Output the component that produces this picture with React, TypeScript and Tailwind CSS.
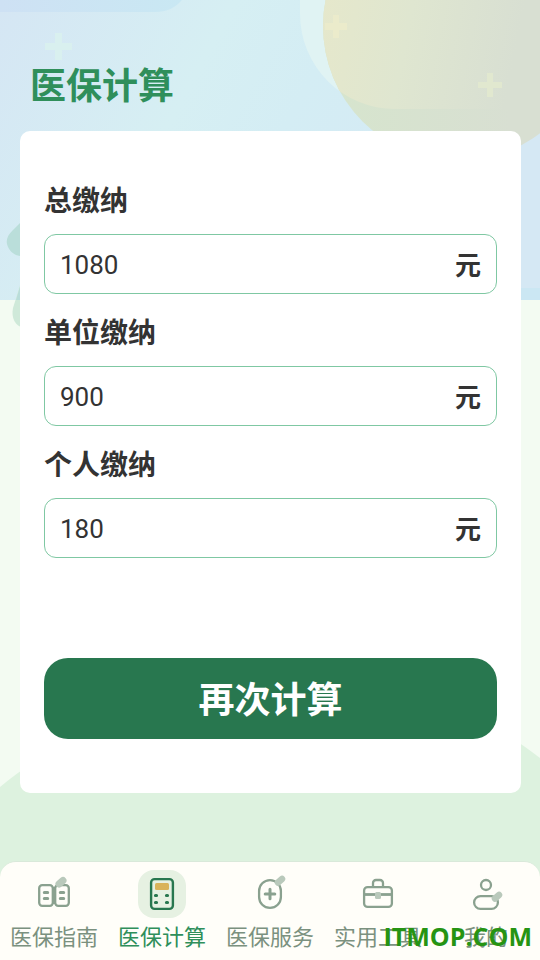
import React, { useState } from 'react';

interface FieldProps {
  id: string;
  label: string;
  value: string;
  onChange: (value: string) => void;
}

const AmountField: React.FC<FieldProps> = ({ id, label, value, onChange }) => (
  <div>
    <label htmlFor={id} className="mb-[15px] block text-[28px] leading-10 font-bold text-[#333333]">
      {label}
    </label>
    <div className="flex h-[60px] items-center rounded-xl border border-[#7fc8a3] px-[15px]">
      <input
        id={id}
        type="text"
        inputMode="decimal"
        value={value}
        onChange={(e) => onChange(e.target.value)}
        className="min-w-0 flex-1 bg-transparent pt-0.5 font-[Roboto,sans-serif] text-[26px] leading-10 text-[#333333] outline-none"
      />
      <span className="text-[26px] leading-10 font-bold text-[#333333]">元</span>
    </div>
  </div>
);

const GuideIcon = () => (
  <svg viewBox="0 0 48 48" className="h-12 w-12" fill="none" stroke="#8aa18f" strokeWidth="2.3">
    <rect x="9.2" y="15.2" width="13.6" height="20.6" rx="3" />
    <rect x="25.2" y="15.2" width="13.6" height="20.6" rx="3" />
    <path d="M24 17v17" strokeWidth="3" />
    <path d="M14.3 22.5h3.4M14.3 28.5h3.4M30.3 22.5h3.4M30.3 28.5h3.4" strokeWidth="3" strokeLinecap="round" />
    <path d="M29 14l4-3.5" stroke="#b9c9bb" strokeWidth="7" strokeLinecap="round" />
  </svg>
);

const CalculatorIcon = () => (
  <svg viewBox="0 0 48 48" className="h-12 w-12" fill="none" stroke="#28774f" strokeWidth="2.4">
    <rect x="13.1" y="9.1" width="21.8" height="29.8" rx="3.5" />
    <rect x="17" y="13" width="14" height="7" rx="1.5" fill="#d9b35a" stroke="none" />
    <path d="M17.5 25.5h1M28.5 25.5h1M17.5 32.5h1M28.5 32.5h1" strokeWidth="3.2" strokeLinecap="round" />
  </svg>
);

const ServiceIcon = () => (
  <svg viewBox="0 0 48 48" className="h-12 w-12" fill="none" stroke="#8aa18f" strokeWidth="2.3">
    <rect x="13.1" y="10.1" width="21.8" height="27.8" rx="10.9" />
    <path d="M24 19.2v9.6M19.2 24h9.6" strokeWidth="3" strokeLinecap="round" />
    <path d="M32 12.5l4-3.5" stroke="#b9c9bb" strokeWidth="6.5" strokeLinecap="round" />
  </svg>
);

const ToolsIcon = () => (
  <svg viewBox="0 0 48 48" className="h-12 w-12" fill="none" stroke="#8aa18f" strokeWidth="2.3">
    <rect x="10.1" y="17.1" width="27.8" height="19.8" rx="3.5" />
    <path d="M19 17v-4a3 3 0 0 1 3-3h4a3 3 0 0 1 3 3v4" />
    <path d="M10 24.5h28" strokeWidth="2.8" />
    <rect x="21" y="22" width="6" height="7" rx="1.5" fill="#b9c9bb" stroke="none" />
  </svg>
);

const MineIcon = () => (
  <svg viewBox="0 0 48 48" className="h-12 w-12" fill="none" stroke="#8aa18f" strokeWidth="2.3">
    <circle cx="24" cy="15" r="5" />
    <rect x="12.1" y="26.1" width="23.8" height="12.8" rx="6.4" />
    <path d="M33 28.5l4-3.5" stroke="#b9c9bb" strokeWidth="6.5" strokeLinecap="round" />
  </svg>
);

const tabs = [
  { label: '医保指南', icon: <GuideIcon /> },
  { label: '医保计算', icon: <CalculatorIcon />, active: true },
  { label: '医保服务', icon: <ServiceIcon /> },
  { label: '实用工具', icon: <ToolsIcon /> },
  { label: '我的', icon: <MineIcon /> },
];

const Backdrop = () => (
  <svg
    viewBox="0 0 540 960"
    preserveAspectRatio="xMidYMin slice"
    className="absolute inset-0 -z-10 h-full w-full"
    aria-hidden="true"
  >
    <defs>
      <linearGradient id="sky" x1="0" y1="0" x2="1" y2="0.3">
        <stop offset="0" stopColor="#d5e6f4" />
        <stop offset="0.4" stopColor="#d6eff3" />
        <stop offset="0.6" stopColor="#d4edf4" />
        <stop offset="1" stopColor="#d5e8f4" />
      </linearGradient>
      <linearGradient id="band" x1="0" y1="0" x2="1" y2="0">
        <stop offset="0" stopColor="#cee1f4" />
        <stop offset="1" stopColor="#c9e8f3" />
      </linearGradient>
      <linearGradient id="sun" x1="0" y1="0" x2="1" y2="0.2">
        <stop offset="0" stopColor="#e7e8ca" />
        <stop offset="0.4" stopColor="#dfe6d0" />
        <stop offset="0.8" stopColor="#d8dfd2" />
      </linearGradient>
      <linearGradient id="sunEdge" x1="0" y1="0" x2="1" y2="0">
        <stop offset="0" stopColor="#d6e5cd" />
        <stop offset="0.7" stopColor="#d8dfd2" />
      </linearGradient>
      <clipPath id="cloud">
        <path d="M540 109H395a95 95 0 0 1-95-95V0h240z" />
      </clipPath>
    </defs>
    <rect width="540" height="960" fill="#f3fbf2" />
    <rect width="540" height="300" fill="url(#sky)" />
    <path d="M0 0h182c-7 8-15 12-27 12H0z" fill="url(#band)" />
    <path d="M520 288h20v12h-20z" fill="#cbe7f3" />
    <path d="M540 109H395a95 95 0 0 1-95-95V0h240z" fill="#e0f3f3" />
    <circle cx="458" cy="26" r="135" fill="url(#sunEdge)" />
    <circle cx="458" cy="26" r="135" fill="url(#sun)" clipPath="url(#cloud)" />
    <path d="M55 33h7v10h10v7H62v10h-7V50H45v-7h10z" fill="#d9f0ef" />
    <path d="M333 15h6v8h8v7h-8v8h-6v-8h-8v-7h8z" fill="#ebebcb" />
    <path d="M487 73h6v9h9v6h-9v9h-6v-9h-9v-6h9z" fill="#e1e8cf" />
    <path d="M28 215L13 230c-5 5-7 9-6 14 2 8 9 13 17 12h10z" fill="#badeda" />
    <path d="M28 260L13 308c-2 10 2 18 11 20h12z" fill="#cfe9d9" />
    <path d="M28 260L16 300h18v-40z" fill="#b9ddda" />
    <path d="M0 787C55 741 155 690 285 677c100-9 190 31 255 81v202H0z" fill="#ddf2df" />
  </svg>
);

const App: React.FC = () => {
  const [total, setTotal] = useState('1080');
  const [company, setCompany] = useState('900');
  const [personal, setPersonal] = useState('180');

  const reset = () => {
    setTotal('');
    setCompany('');
    setPersonal('');
  };

  return (
    <div className="relative isolate flex min-h-screen flex-col overflow-hidden font-['Noto_Sans_CJK_SC',sans-serif]">
      <Backdrop />

      <header className="px-[30px] pt-14 pb-[21px]">
        <h1 className="text-[36px] leading-[54px] font-bold text-[#2f8f5b]">医保计算</h1>
      </header>

      <main className="flex-1 pr-[19px] pb-6 pl-5">
        <form
          className="rounded-[10px] bg-white px-6 pt-12 pb-[54px]"
          onSubmit={(e) => {
            e.preventDefault();
            reset();
          }}
        >
          <div className="flex flex-col gap-[17px]">
            <AmountField id="total" label="总缴纳" value={total} onChange={setTotal} />
            <AmountField id="company" label="单位缴纳" value={company} onChange={setCompany} />
            <AmountField id="personal" label="个人缴纳" value={personal} onChange={setPersonal} />
          </div>
          <button
            type="submit"
            className="mt-[100px] h-[81px] w-full rounded-3xl bg-[#28774f] pb-1 text-[36px] leading-[54px] font-bold text-white"
          >
            再次计算
          </button>
        </form>
      </main>

      {/* Bottom tab bar */}
      <nav className="relative rounded-t-2xl border-t border-[#d9e9da] bg-[#fffef9] pt-2 pb-[9px]">
        <div className="grid grid-cols-5">
          {tabs.map((tab) => (
            <a
              key={tab.label}
              href="#"
              aria-current={tab.active ? 'page' : undefined}
              className="flex flex-col items-center gap-px"
            >
              <span className={tab.active ? 'rounded-2xl bg-[#e6f1e2]' : ''}>{tab.icon}</span>
              <span
                className={`text-[22px] leading-8 whitespace-nowrap ${
                  tab.active ? 'text-[#2f8f5b]' : 'text-[#7b917f]'
                }`}
              >
                {tab.label}
              </span>
            </a>
          ))}
        </div>
        <span className="pointer-events-none absolute right-2 bottom-1.5 font-['Open_Sans',sans-serif] text-[25px] leading-9 font-bold text-[#269413]">
          ITMOP.COM
        </span>
      </nav>
    </div>
  );
};

export default App;
